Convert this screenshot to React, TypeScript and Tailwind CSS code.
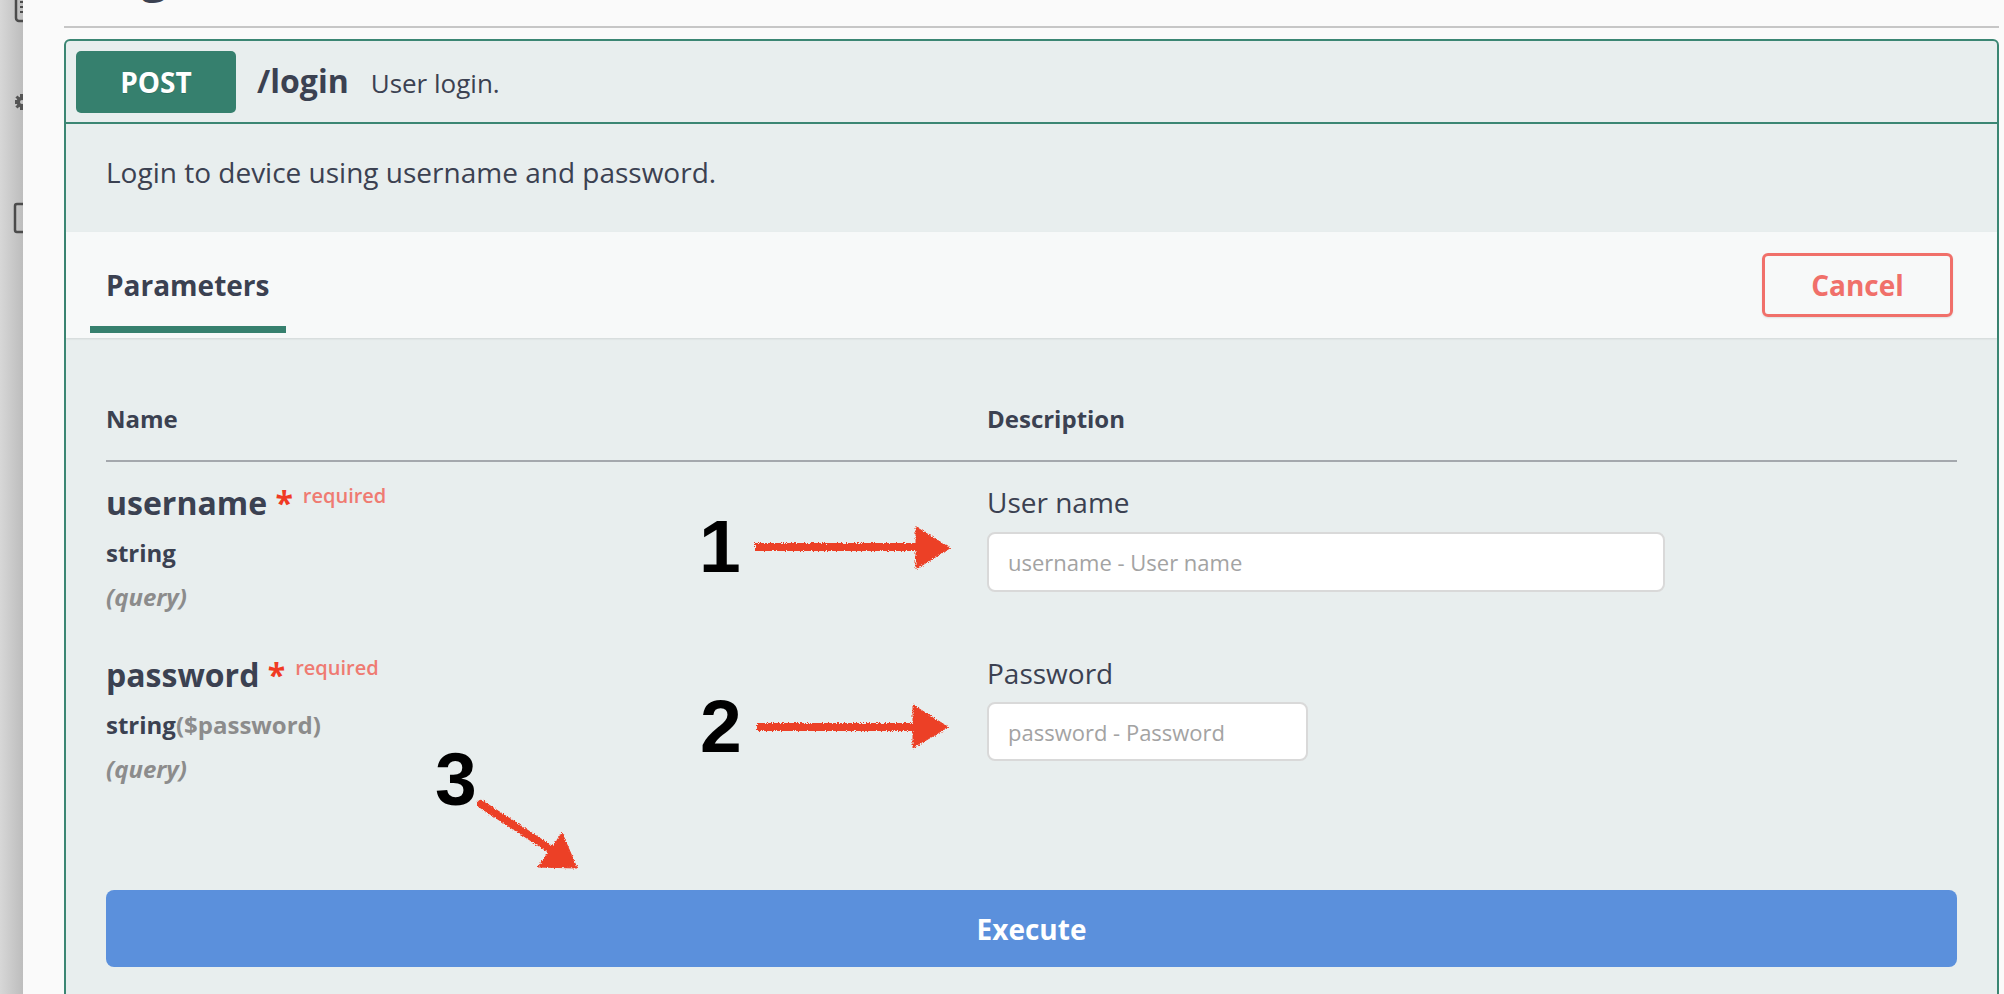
import React from "react";

function SideStrip() {
  return (
    <aside className="w-[23px] shrink-0 overflow-hidden bg-gradient-to-r from-[#d7d7d7] to-[#bdbdbd]">
      <svg width="23" height="994" viewBox="0 0 23 994">
        <rect x="16" y="-8" width="16" height="29" rx="3" fill="none" stroke="#4b4b4b" strokeWidth="2.5" />
        <path d="M20 2 H26 M20 7 H26 M20 12 H26" stroke="#4b4b4b" strokeWidth="2" />
        <g fill="#555">
          <circle cx="22" cy="102" r="5.5" />
          <rect x="15" y="100" width="3" height="4" />
          <rect x="20" y="94" width="4" height="3" />
          <rect x="20" y="107" width="4" height="3" />
          <rect x="16" y="96" width="3" height="3" transform="rotate(45 17.5 97.5)" />
          <rect x="16" y="105" width="3" height="3" transform="rotate(45 17.5 106.5)" />
        </g>
        <circle cx="22" cy="102" r="2" fill="#c6c6c6" />
        <rect x="15" y="204" width="16" height="28" rx="2" fill="none" stroke="#4b4b4b" strokeWidth="2.5" />
      </svg>
    </aside>
  );
}

function Overlay() {
  return (
    <svg
      className="pointer-events-none absolute left-0 top-0"
      width="2004"
      height="994"
      viewBox="0 0 2004 994"
    >
      <defs>
        <filter id="crayon" x="-20%" y="-20%" width="140%" height="140%">
          <feTurbulence type="fractalNoise" baseFrequency="0.9" numOctaves="2" seed="4" result="noise" />
          <feDisplacementMap in="SourceGraphic" in2="noise" scale="4" xChannelSelector="R" yChannelSelector="G" />
        </filter>
      </defs>
      <g fill="#ec4027" stroke="#ec4027" filter="url(#crayon)">
        <line x1="755" y1="547" x2="922" y2="547" strokeWidth="8" />
        <polygon points="916,527 950,548 916,569" strokeWidth="1" />
        <line x1="757" y1="727" x2="918" y2="727" strokeWidth="8" />
        <polygon points="913,705 948,727 913,748" strokeWidth="1" />
        <line x1="481" y1="804" x2="553" y2="851" strokeWidth="8" strokeLinecap="round" />
        <polygon points="562,833 538,867 577,868" strokeWidth="1" />
      </g>
      <g fill="#000" fontFamily="'Liberation Sans', Arial, sans-serif" fontWeight="700" fontSize="75">
        <text x="699" y="572">1</text>
        <text x="700" y="752">2</text>
        <text x="435" y="805">3</text>
      </g>
    </svg>
  );
}

export default function App() {
  return (
    <div className="relative flex h-[994px] w-[2004px] overflow-hidden bg-[#fafafa] font-['Open_Sans',sans-serif] text-[#3b4151]">
      <SideStrip />
      <main className="flex flex-1 flex-col pl-[41px] pr-[5px]">
        <div className="h-[28px] shrink-0 overflow-hidden border-b-2 border-[#c6c6c6] pl-[20px]">
          <div className="mt-[-51px] text-[48px] font-bold leading-[48px]">Login</div>
        </div>

        <section className="mt-[11px] flex flex-col rounded-[6px] border-2 border-[#3b8673] bg-[#e8eeee]">
          {/* summary */}
          <div className="flex h-[83px] items-center border-b-2 border-[#3b8673] px-[10px]">
            <div className="flex h-[62px] w-[160px] items-center justify-center rounded-[5px] bg-[#36806e] text-[28px] font-bold text-white [text-shadow:0_1px_0_rgba(0,0,0,0.15)]">
              POST
            </div>
            <div className="flex items-baseline">
              <span className="ml-[21px] text-[32px] font-bold leading-[40px]">/login</span>
              <span className="ml-[22px] text-[26px] leading-[40px]">User login.</span>
            </div>
          </div>

          {/* description */}
          <div className="pb-[40px] pl-[40px] pt-[28px] text-[28px] leading-[40px]">
            Login to device using username and password.
          </div>

          {/* tab bar */}
          <div className="flex h-[106px] items-end justify-between bg-[#f7f9f9] pl-[24px] pr-[44px] shadow-[0_1px_2px_rgba(0,0,0,0.1)]">
            <div className="flex flex-col pb-[5px]">
              <div className="px-[16px] text-[28px] font-bold leading-[40px]">Parameters</div>
              <div className="mt-[21px] h-[7px] w-[196px] bg-[#36806e]" />
            </div>
            <button className="flex h-[64px] w-[191px] items-center justify-center self-center rounded-[6px] border-[3px] border-[#f0706a] bg-transparent text-[28px] font-bold text-[#f0706a] shadow-[0_1px_2px_rgba(0,0,0,0.1)]">
              Cancel
            </button>
          </div>

          {/* parameters table */}
          <div className="px-[40px] pt-[65px]">
            <div className="flex border-b-2 border-[#a4a8ad] pb-[25px] text-[24px] font-bold leading-[32px]">
              <div className="w-[881px] shrink-0">Name</div>
              <div>Description</div>
            </div>

            {/* username row */}
            <div className="flex pt-[21px]">
              <div className="w-[881px] shrink-0">
                <div className="text-[32px] font-bold leading-[40px]">
                  username
                  <span className="text-[#f03a23]">&nbsp;*</span>
                  <span className="px-[10px] align-[12px] text-[20px] font-semibold leading-[20px] text-[#ef7b72]">
                    required
                  </span>
                </div>
                <div className="mt-[12px] text-[24px] font-bold leading-[36px]">string</div>
                <div className="mt-[8px] text-[24px] font-bold italic leading-[36px] text-[#8c8c8c]">
                  (query)
                </div>
              </div>
              <div className="flex flex-1 flex-col">
                <div className="mt-[-1px] text-[28px] leading-[40px]">User name</div>
                <input
                  className="mt-[10px] h-[60px] w-[678px] rounded-[8px] border-2 border-[#d9d9d9] bg-white pl-[19px] text-[22px] outline-none placeholder:text-[#a3a3a3]"
                  placeholder="username - User name"
                />
              </div>
            </div>

            {/* password row */}
            <div className="mt-[40px] flex">
              <div className="w-[881px] shrink-0">
                <div className="text-[32px] font-bold leading-[40px]">
                  password
                  <span className="text-[#f03a23]">&nbsp;*</span>
                  <span className="px-[10px] align-[12px] text-[20px] font-semibold leading-[20px] text-[#ef7b72]">
                    required
                  </span>
                </div>
                <div className="mt-[12px] text-[24px] font-bold leading-[36px]">
                  string<span className="text-[#8c8c8c]">($password)</span>
                </div>
                <div className="mt-[8px] text-[24px] font-bold italic leading-[36px] text-[#8c8c8c]">
                  (query)
                </div>
              </div>
              <div className="flex flex-1 flex-col">
                <div className="mt-[-2px] text-[28px] leading-[40px]">Password</div>
                <input
                  className="mt-[9px] h-[59px] w-[321px] rounded-[8px] border-2 border-[#d9d9d9] bg-white pl-[19px] text-[22px] outline-none placeholder:text-[#a3a3a3]"
                  placeholder="password - Password"
                />
              </div>
            </div>

            <button className="mt-[103px] flex h-[77px] w-full items-center justify-center rounded-[8px] bg-[#5b90dc] text-[28px] font-bold text-white">
              Execute
            </button>
            <div className="h-[40px]" />
          </div>
        </section>
      </main>
      <Overlay />
    </div>
  );
}
